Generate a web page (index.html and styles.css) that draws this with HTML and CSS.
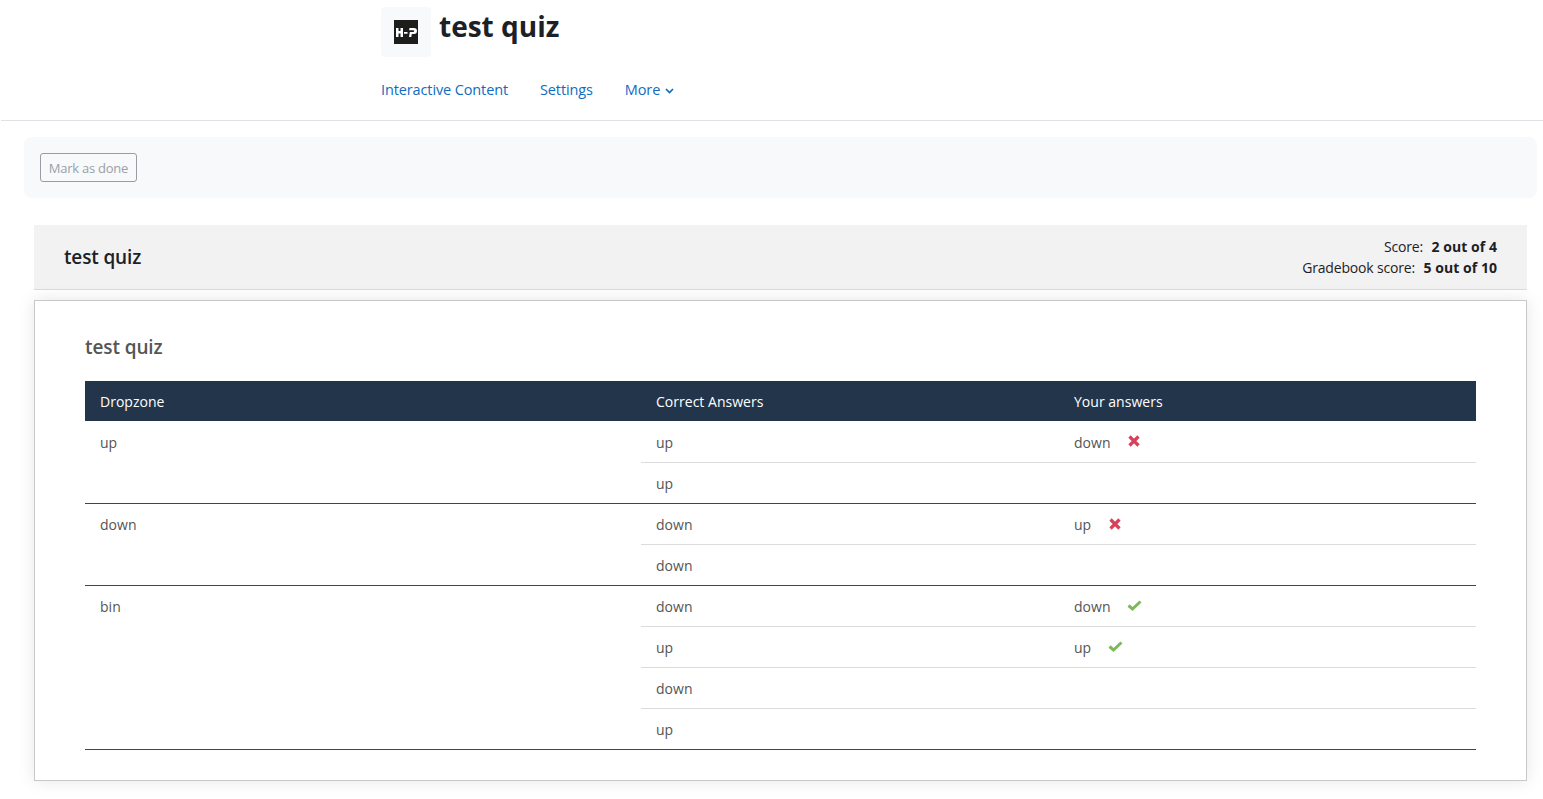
FILE: index.html
```html
<!DOCTYPE html>
<html lang="en">
<head>
<meta charset="utf-8">
<title>test quiz</title>
<link rel="stylesheet" href="styles.css">
</head>
<body>
<header class="page-header">
  <div class="header-inner">
    <div class="title-row">
      <div class="activity-icon">
        <svg width="24" height="24" viewBox="0 0 24 24"><rect width="24" height="24" fill="#1d1d1b"/><path d="M2 8h2.500v3h2V8H9v9H6.500v-3.500h-2V17H2zM10 12h3.500v1.800H10zM15.500 8H20a2.800 2.800 0 0 1 0 6h-2.200l-.5 3h-2.300l.8-5h3.500a.9.900 0 0 0 0-1.800h-4.200z" fill="#fff"/></svg>
      </div>
      <h1 class="page-title">test quiz</h1>
    </div>
    <nav class="tabs">
      <a class="tab" href="#">Interactive Content</a>
      <a class="tab" href="#">Settings</a>
      <a class="tab" href="#">More <svg class="caret" width="9" height="6" viewBox="0 0 9 6"><path d="M1 1l3.500 3.500L8 1" fill="none" stroke="#0f6cbf" stroke-width="1.700"/></svg></a>
    </nav>
  </div>
</header>
<main>
  <div class="completion-bar"><button class="done-btn" type="button">Mark as done</button></div>
  <section class="content">
    <div class="score-bar">
      <div class="score-title">test quiz</div>
      <div class="score-values">
        <div>Score: <b>2 out of 4</b></div>
        <div>Gradebook score: <b>5 out of 10</b></div>
      </div>
    </div>
    <div class="card">
      <h2 class="card-title">test quiz</h2>
      <table class="results">
        <colgroup><col class="col-a"><col class="col-b"><col class="col-c"></colgroup>
        <thead>
          <tr><th>Dropzone</th><th>Correct Answers</th><th>Your answers</th></tr>
        </thead>
        <tbody>
          <tr><td rowspan="2" class="zone">up</td><td>up</td><td>down <svg class="mark" width="14" height="14" viewBox="0 0 14 14"><path d="M2.500 2.500l9 9M11.500 2.500l-9 9" stroke="#d9405a" stroke-width="3.200" fill="none"/></svg></td></tr>
          <tr class="last"><td>up</td><td></td></tr>
          <tr><td rowspan="2" class="zone">down</td><td>down</td><td>up <svg class="mark" width="14" height="14" viewBox="0 0 14 14"><path d="M2.500 2.500l9 9M11.500 2.500l-9 9" stroke="#d9405a" stroke-width="3.200" fill="none"/></svg></td></tr>
          <tr class="last"><td>down</td><td></td></tr>
          <tr><td rowspan="4" class="zone">bin</td><td>down</td><td>down <svg class="mark" width="15" height="14" viewBox="0 0 15 14"><path d="M1.500 6.500l4 3.500 8-7.500" stroke="#7db85c" stroke-width="3" fill="none"/></svg></td></tr>
          <tr><td>up</td><td>up <svg class="mark" width="15" height="14" viewBox="0 0 15 14"><path d="M1.500 6.500l4 3.500 8-7.500" stroke="#7db85c" stroke-width="3" fill="none"/></svg></td></tr>
          <tr><td>down</td><td></td></tr>
          <tr class="last"><td>up</td><td></td></tr>
        </tbody>
      </table>
    </div>
  </section>
</main>
</body>
</html>
```
FILE: styles.css
```css
* { box-sizing: border-box; }
html, body { margin: 0; padding: 0; }
body {
  background: #fff;
  color: #1d2125;
  font-family: "Open Sans", "Noto Sans", sans-serif;
  font-size: 14px;
  overflow: hidden;
  height: 799px;
}
.page-header {
  border-bottom: 1px solid #dee2e6;
  height: 121px;
  margin-left: 1px;
}
.header-inner { padding: 7px 0 0 380px; }
.title-row { display: flex; align-items: flex-start; }
.activity-icon {
  width: 50px;
  height: 50px;
  background: #f8f9fa;
  border-radius: 4px;
  display: flex;
  align-items: center;
  justify-content: center;
}
.page-title {
  margin: -1px 0 0 8px;
  font-size: 28px;
  font-weight: 700;
  line-height: 40px;
  letter-spacing: 0;
}
.tabs { display: flex; gap: 32px; margin-top: 23px; }
.tab {
  color: #0f6cbf;
  text-decoration: none;
  font-size: 14.5px;
  line-height: 20px;
  letter-spacing: -0.12px;
}
.caret { margin-left: 1px; vertical-align: 1px; }
main { padding: 16px 6px 0 24px; }
.completion-bar {
  background: #f8f9fa;
  border-radius: 8px;
  height: 61px;
  padding: 16px;
}
.done-btn {
  width: 97px;
  height: 29px;
  padding: 2px 0 0;
  border: 1px solid #999ca3;
  border-radius: 3px;
  background: transparent;
  color: #9a9fa7;
  font: 13px/1 "Open Sans", sans-serif;
  letter-spacing: -0.25px;
}
.content { margin: 27px 10px 0; }
.score-bar {
  height: 65px;
  background: #f2f2f2;
  border-bottom: 1px solid #dcdcdc;
  padding: 0 30px;
  display: flex;
  justify-content: space-between;
  align-items: center;
}
.score-title { font-size: 19px; font-weight: 600; letter-spacing: -0.15px; }
.score-values { text-align: right; font-size: 14px; line-height: 21px; letter-spacing: -0.17px; }
.score-values b { margin-left: 5px; font-weight: 700; letter-spacing: 0.05px; }
.card {
  margin-top: 10px;
  height: 481px;
  background: #fff;
  border: 1px solid #c8c8c8;
  box-shadow: 0 0 16px rgba(0, 0, 0, 0.1);
  padding: 0 50px;
}
.card-title {
  margin: 0;
  padding-top: 33px;
  height: 80px;
  font-size: 19px;
  line-height: 26px;
  font-weight: 600;
  color: #555;
  letter-spacing: -0.1px;
}
.results {
  width: 1391px;
  table-layout: fixed;
  border-collapse: collapse;
  font-size: 14px;
  color: #555;
  letter-spacing: 0.02px;
}
.col-a { width: 556px; }
.col-b { width: 418px; }
.col-c { width: 417px; }
.results th {
  height: 40px;
  background: #23354b;
  color: #fff;
  font-weight: 400;
  text-align: left;
  padding: 0 15px;
}
.results td {
  height: 41px;
  padding: 2px 15px 0;
  border-bottom: 1px solid #dcdcdc;
}
.results td.zone { vertical-align: top; padding-top: 11.5px; border-bottom: 1px solid #444; }
.results tr.last td { border-bottom: 1px solid #444; }
.mark { margin-left: 13px; vertical-align: -0.5px; }
```
